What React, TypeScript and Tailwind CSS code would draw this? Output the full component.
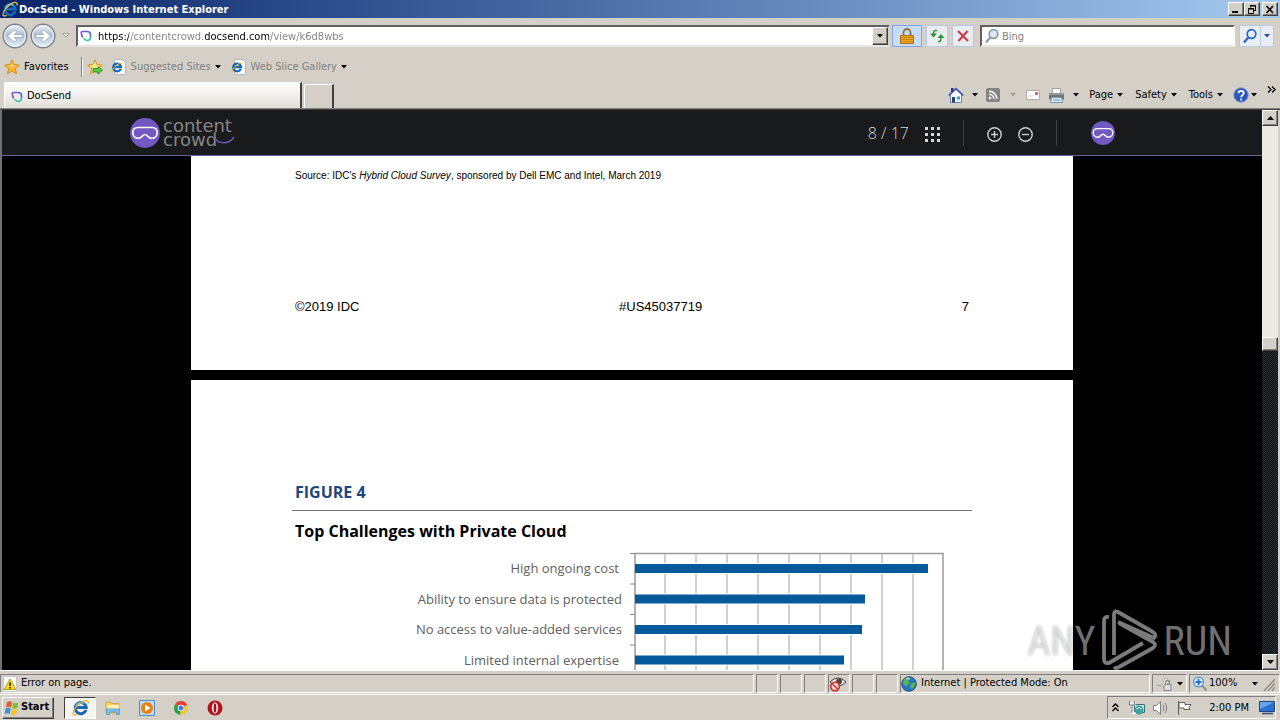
import type { ReactNode } from "react";

const ui = "font-['DejaVu_Sans_Condensed','DejaVu_Sans',sans-serif]";
const raised =
  "border border-t-white border-l-white border-r-[#404040] border-b-[#404040] bg-[#d4d0c8] shadow-[inset_-1px_-1px_0_#808080]";
const sunken = "border border-t-[#808080] border-l-[#808080] border-r-white border-b-white";

function Arrow({ color = "#000000" }: { color?: string }) {
  return (
    <svg width="6" height="4" viewBox="0 0 6 4" className="shrink-0">
      <path d="M0 0h6L3 3.5z" fill={color} />
    </svg>
  );
}

function IeIcon({ size = 16 }: { size?: number }) {
  return (
    <svg width={size} height={size} viewBox="0 0 16 16" className="shrink-0">
      <path
        d="M13.2 10.2A5.2 5.2 0 1 1 13.4 8H4"
        fill="none"
        stroke="#1667b8"
        strokeWidth="2.8"
      />
      <path d="M11.5 4.6A5 5 0 0 0 3.6 6.8" fill="none" stroke="#6fc3f2" strokeWidth="1.2" />
      <path
        d="M15 4.5C16 1.5 13.5.2 9.5 2.6 5 5.200 1.300 10 1 13.200c-.2 2.200 1.600 2.200 3.600 1"
        fill="none"
        stroke="#f0b82c"
        strokeWidth="1.3"
      />
    </svg>
  );
}

function IePage() {
  return (
    <svg width="16" height="16" viewBox="0 0 16 16" className="shrink-0">
      <path d="M3.500.5h8l3 3v12h-11z" fill="#fff" stroke="#b5b5b5" />
      <path d="M9.800 9.800A3.900 3.900 0 1 1 10 8H3" fill="none" stroke="#1667b8" strokeWidth="2.300" />
      <path d="M11.500 4.500C9 2.500 .8 9 1.200 12.800" fill="none" stroke="#f0b82c" />
    </svg>
  );
}

function DocSendIcon() {
  return (
    <svg width="12" height="12" viewBox="0 0 12 12" className="shrink-0">
      <path d="M2.500 7.500 1.300 3.200Q1 1.500 2.700 1.500H6" fill="none" stroke="#7a4fd0" strokeWidth="1.600" />
      <path d="M6 1.500h1.500A3.300 3.300 0 0 1 10.500 5v2" fill="none" stroke="#4f6ad8" strokeWidth="1.600" />
      <path d="M10.500 6.500c0 2.500-1.500 4-3.300 4C5.500 10.500 5 9 3.500 8.500" fill="none" stroke="#35c3a5" strokeWidth="1.600" />
    </svg>
  );
}

function Star({ add = false }: { add?: boolean }) {
  return (
    <svg width="16" height="16" viewBox="0 0 16 16" className="shrink-0">
      <path
        d="m8 .8 2.100 4.800 5.200.5-3.900 3.500 1.100 5.200L8 12.100l-4.500 2.700 1.100-5.200L.7 6.100l5.200-.5z"
        fill={add ? "#fbe36b" : "#f9b32b"}
        stroke="#d08a10"
        strokeWidth=".9"
      />
      <path d="m8 3 1.300 3.300 3 .4-5.500 2L4 6.700l2.800-.4z" fill="#fff" opacity=".35" />
      {add && <path d="M6 9.500h5V7.500l4.500 3.700-4.500 3.700v-2H6z" fill="#62c645" stroke="#2b8a1d" strokeWidth=".8" />}
    </svg>
  );
}

function NavArrow({ forward = false }: { forward?: boolean }) {
  return (
    <button aria-label={forward ? "Forward" : "Back"} className="shrink-0">
      <svg width="26" height="26" viewBox="0 0 26 26">
        <defs>
          <linearGradient id={forward ? "navF" : "navB"} x1="0" y1="0" x2="0" y2="1">
            <stop offset="0" stopColor="#f4f7fa" />
            <stop offset=".45" stopColor="#b3c0d0" />
            <stop offset="1" stopColor="#e8f6ff" />
          </linearGradient>
        </defs>
        <circle cx="13" cy="13" r="11.800" fill={`url(#${forward ? "navF" : "navB"})`} stroke="#76808d" strokeWidth="1.400" />
        <circle cx="13" cy="13" r="10.500" fill="none" stroke="#f4f8fc" />
        <path
          d={forward ? "M5.500 11.500h8L11 8.500l3-1.500 6.500 6-6.500 6-3-1.500 2.500-3h-8z" : "M20.500 11.500h-8L15 8.500 12 7l-6.500 6 6.500 6 3-1.500-2.500-3h8z"}
          fill="#fff"
          stroke="#8b9db3"
          strokeWidth=".7"
        />
      </svg>
    </button>
  );
}

function Magnifier({ color, fill = "none" }: { color: string; fill?: string }) {
  return (
    <svg width="16" height="16" viewBox="0 0 16 16" className="shrink-0">
      <circle cx="9.500" cy="6" r="4.300" fill={fill} stroke={color} strokeWidth="1.700" />
      <path d="m6.300 9.500-4.300 5" stroke={color} strokeWidth="2.200" />
    </svg>
  );
}

function Goggles({ size }: { size: number }) {
  return (
    <svg width={size} height={size} viewBox="0 0 30 30" className="shrink-0">
      <circle cx="15" cy="15" r="15" fill="#7159c1" />
      <path
        d="M8 9.500h14c3.500 0 5.200 2.200 5.200 5.200S25 20.300 21.500 20.300c-3.500 0-4-3.800-6.500-3.800s-3 3.800-6.500 3.800-5.700-2.600-5.700-5.600S4.500 9.500 8 9.500z"
        fill="none"
        stroke="#fff"
        strokeWidth="1.700"
      />
    </svg>
  );
}

function TitleBar() {
  return (
    <div className="flex h-[18px] shrink-0 items-center gap-px bg-linear-to-r from-[#0a246a] to-[#a6caf0] pr-0.5 pl-0.5">
      <IeIcon />
      <h1 className="flex-1 pt-px text-[11px] leading-4 font-bold text-white">DocSend - Windows Internet Explorer</h1>
      <div className="flex gap-0.5">
        <div className="flex">
          <button aria-label="Minimize" className={`flex h-3.5 w-4 items-center justify-center ${raised}`}>
            <svg width="10" height="9" viewBox="0 0 10 9"><path d="M1 6h6v2H1z" /></svg>
          </button>
          <button aria-label="Restore" className={`flex h-3.5 w-4 items-center justify-center ${raised}`}>
            <svg width="10" height="9" viewBox="0 0 10 9" fill="none" stroke="#000">
              <path d="M3.500 2.500V.5h5v5H7M3 1h6M1.500 3.500h5v5h-5zM1 4h6" />
            </svg>
          </button>
        </div>
        <button aria-label="Close" className={`flex h-3.5 w-4 items-center justify-center ${raised}`}>
          <svg width="10" height="9" viewBox="0 0 10 9"><path d="m1.500 1 6.500 7M8 1 1.500 8" stroke="#000" strokeWidth="1.600" /></svg>
        </button>
      </div>
    </div>
  );
}

function AddressRow() {
  const tool = "flex h-[22px] shrink-0 items-center justify-center border border-[#b9cbe2] bg-[#e9edf3]";
  return (
    <div className="flex h-[35px] shrink-0 items-center pr-1.5 pl-0.5">
      <div className="flex items-center gap-0.5">
        <NavArrow />
        <NavArrow forward />
      </div>
      <button aria-label="Recent pages" className="mx-1.5 flex w-2 justify-center">
        <svg width="8" height="5" viewBox="0 0 8 5"><path d="M.5.5h7L4 4.300z" fill="#e8e5df" stroke="#a8a49c" /></svg>
      </button>
      <div className="flex h-[22px] flex-1 items-center border-2 border-t-[#606060] border-r-[#d4d0c8] border-b-[#e8e5df] border-l-[#606060] bg-white pl-0.5">
        <DocSendIcon />
        <input
          aria-label="Address"
          defaultValue="https://contentcrowd.docsend.com/view/k6d8wbs"
          className="ml-1.5 h-[18px] min-w-0 flex-1 bg-[linear-gradient(to_right,#000_31px,#808080_31px,#808080_107px,#000_107px,#000_171px,#808080_171px)] bg-clip-text pt-0.5 text-[11px] text-transparent outline-none"
        />
        <button aria-label="Show addresses" className={`flex h-[18px] w-4 items-center justify-center ${raised}`}>
          <Arrow />
        </button>
      </div>
      <button aria-label="Security report" className="ml-0.5 flex h-[22px] w-[30px] shrink-0 items-center justify-center border border-[#7da7e8] bg-[#c6dcfa]">
        <svg width="14" height="16" viewBox="0 0 14 16">
          <path d="M3.500 8V4.500a3.500 3.500 0 0 1 7 0V8" fill="none" stroke="#8d7432" strokeWidth="1.800" />
          <path d="M.5 7.500h13v8H.5z" fill="#f0a91e" stroke="#a8700e" />
          <path d="M1 9.500h12M1 11.500h12M1 13.500h12" stroke="#c98512" />
        </svg>
      </button>
      <button aria-label="Refresh" className={`ml-1 w-[22px] ${tool}`}>
        <svg width="16" height="14" viewBox="0 0 16 14" fill="none" stroke="#2e9132" strokeWidth="1.500">
          <path d="M8 1.500C5 1 4.500 2 4.500 5M9 12.500c2.500.5 3-.5 3-4" />
          <path d="M1 4.500h7l-3.500 4zM8.500 9h7L12 5z" fill="#2e9132" stroke="none" />
        </svg>
      </button>
      <button aria-label="Stop" className={`ml-1 w-[22px] ${tool}`}>
        <svg width="12" height="12" viewBox="0 0 12 12"><path d="m1 1 10 10M10.500 1 1.500 11" stroke="#cf3a3f" strokeWidth="2" /></svg>
      </button>
      <div className="ml-1.5 flex h-[22px] w-[255px] shrink-0 items-center border-2 border-t-[#606060] border-r-white border-b-[#e8e5df] border-l-[#606060] bg-white pl-0.5">
        <Magnifier color="#8e9aa8" fill="#dceaf5" />
        <input aria-label="Search" placeholder="Bing" className="ml-0.5 h-[18px] min-w-0 flex-1 pt-0.5 text-[11px] outline-none placeholder:text-[#808080]" />
      </div>
      <button aria-label="Search the web" className={`ml-1 w-[22px] ${tool}`}>
        <Magnifier color="#2566c4" fill="#e3effc" />
      </button>
      <button aria-label="Search options" className={`-ml-px w-[14px] ${tool}`}>
        <Arrow color="#1c4f9c" />
      </button>
    </div>
  );
}

function FavoritesRow() {
  return (
    <div className="flex h-[27px] shrink-0 items-center pt-px pl-1 text-[11px]">
      <button className="flex items-center gap-1"><Star />Favorites</button>
      <div className="mr-1 ml-3 h-5 w-0.5 border-r border-l border-r-white border-l-[#808080]" />
      <button aria-label="Add to Favorites Bar"><Star add /></button>
      <button className="ml-2 flex items-center gap-1 text-[#808080]">
        <IePage />Suggested Sites<Arrow />
      </button>
      <button className="ml-2.5 flex items-center gap-1 text-[#808080]">
        <IePage />Web Slice Gallery<Arrow />
      </button>
    </div>
  );
}

function TabRow() {
  return (
    <div className="flex h-[29px] shrink-0 items-end border-b border-[#808080] pl-1">
      <div role="tab" aria-selected="true" className="flex h-[26px] w-[298px] items-center gap-1 border-t border-r-2 border-l border-t-white border-r-[#404040] border-l-white bg-linear-to-b from-white to-[#e2dfd9] pt-0.5 pl-1.5 text-[11px]">
        <DocSendIcon />DocSend
      </div>
      <button aria-label="New Tab" className="ml-0.5 h-6 w-[30px] border-t border-r-2 border-l border-t-white border-r-[#404040] border-l-white" />
      <div className="flex h-full flex-1 items-center justify-end pt-0.5 text-[11px]">
        <button aria-label="Home" className="flex items-center gap-2">
          <svg width="16" height="16" viewBox="0 0 16 16">
            <path d="M3 1h2.500v5H3z" fill="#23308c" />
            <path d="M2.500 7.500 8 2.500l5.500 5v8h-11z" fill="#f7f9fd" stroke="#6d84b4" />
            <path d="m.7 8.500 7.300-7 7.300 7" fill="none" stroke="#394fa6" strokeWidth="1.500" />
            <path d="M4 10h3v5.500H4z" fill="#294278" /><path d="M9 9.500h3v3H9z" fill="#3ba0d8" />
          </svg>
          <Arrow />
        </button>
        <button aria-label="Feeds" className="ml-2 flex items-center gap-2.5">
          <svg width="14" height="14" viewBox="0 0 14 14">
            <rect width="14" height="14" rx="2" fill="#858585" />
            <circle cx="4" cy="10" r="1.300" fill="#fff" />
            <path d="M3 6.200A4.800 4.800 0 0 1 7.800 11M3 3.200A7.800 7.800 0 0 1 10.800 11" fill="none" stroke="#fff" strokeWidth="1.400" />
          </svg>
          <Arrow color="#a09c94" />
        </button>
        <button aria-label="Read mail" className="ml-2.5">
          <svg width="14" height="10" viewBox="0 0 14 10">
            <path d="M.5.5h13v9H.5z" fill="#fff" stroke="#b0a9a4" /><path d="M9 2h3v3H9z" fill="#d8626a" /><path d="M2 6h5" stroke="#d7d3ce" />
          </svg>
        </button>
        <button aria-label="Print" className="ml-2 flex items-center gap-2">
          <svg width="17" height="15" viewBox="0 0 17 15">
            <path d="M4.500.5h8v6h-8z" fill="#fff" stroke="#9aa0a6" />
            <path d="M1 5h15v6.500H1z" fill="#70757b" /><path d="M1 6h15" stroke="#b5babf" />
            <path d="M3.500 9.500h10l1 5h-12z" fill="#d9ecf8" stroke="#7e95a5" /><path d="M5 12h7" stroke="#4c9bcf" />
          </svg>
          <Arrow />
        </button>
        <button className="ml-2.5 flex items-center gap-1">Page<Arrow /></button>
        <button className="ml-3 flex items-center gap-1">Safety<Arrow /></button>
        <button className="ml-3 flex items-center gap-1">Tools<Arrow /></button>
        <button aria-label="Help" className="ml-2.5 flex items-center gap-0.5">
          <svg width="16" height="16" viewBox="0 0 16 16">
            <circle cx="8" cy="8" r="7.300" fill="#2c56b8" stroke="#8fa3cf" />
            <path d="M5.500 6.200C5.500 3 10.700 3 10.700 6.200 10.700 8 8.200 8 8.200 10.200M8.200 11.500v2" fill="none" stroke="#fff" strokeWidth="1.800" />
          </svg>
          <Arrow />
        </button>
        <button aria-label="More commands" className="mr-1 mb-3 ml-2.5">
          <svg width="9" height="7" viewBox="0 0 9 7"><path d="m1 .5 3 3-3 3M5 .5l3 3-3 3" fill="none" stroke="#000" strokeWidth="1.300" /></svg>
        </button>
      </div>
    </div>
  );
}

function ViewerHeader() {
  return (
    <header className="flex h-[46px] shrink-0 items-center border-b border-[#6c62a0] bg-[#191a1c] pl-32">
      <a href="#home" aria-label="Content Crowd" className="flex flex-1 items-center gap-[3px]">
        <Goggles size={30} />
        <div className="flex items-end">
          <div className="font-['DejaVu_Sans',sans-serif] text-[18px] leading-[14px] text-[#858587]">
            <div>content</div>
            <div>crowd</div>
          </div>
          <svg width="22" height="12" viewBox="0 0 22 12" className="-ml-[18px] shrink-0">
            <path d="M1 3c3 6 14 7 19-1" fill="none" stroke="#6a55b4" strokeWidth="1.500" />
          </svg>
        </div>
      </a>
      <div className="mr-4 font-['Open_Sans',sans-serif] text-[16px] font-light text-[#d8d8d8]">8 / 17</div>
      <button aria-label="Thumbnails" className="pt-1">
        <svg width="15" height="15" viewBox="0 0 15 15" fill="#d6d6d6">
          <path d="M0 0h3v3H0zM6 0h3v3H6zM12 0h3v3h-3zM0 6h3v3H0zM6 6h3v3H6zM12 6h3v3h-3zM0 12h3v3H0zM6 12h3v3H6zM12 12h3v3h-3z" />
        </svg>
      </button>
      <div className="mr-[23px] ml-[23px] h-[26px] w-px bg-[#3d3e41]" />
      <button aria-label="Zoom in" className="pt-1">
        <svg width="15" height="15" viewBox="0 0 15 15" fill="none" stroke="#cfcfcf" strokeWidth="1.400">
          <circle cx="7.500" cy="7.500" r="6.700" /><path d="M4 7.500h7M7.500 4v7" />
        </svg>
      </button>
      <button aria-label="Zoom out" className="ml-4 pt-1">
        <svg width="15" height="15" viewBox="0 0 15 15" fill="none" stroke="#cfcfcf" strokeWidth="1.400">
          <circle cx="7.500" cy="7.500" r="6.700" /><path d="M4 7.500h7" />
        </svg>
      </button>
      <div className="mr-[34px] ml-[23px] h-[26px] w-px bg-[#3d3e41]" />
      <div className="mr-[147px]"><Goggles size={24} /></div>
    </header>
  );
}

const challenges = [
  { label: "High ongoing cost", end: 619, value: 293 },
  { label: "Ability to ensure data is protected", end: 622, value: 230 },
  { label: "No access to value-added services", end: 622, value: 227 },
  { label: "Limited internal expertise", end: 619, value: 209 },
];

function Chart() {
  return (
    <svg width="680" height="130" viewBox="292 546 680 130" className="font-['Open_Sans',sans-serif] text-[13px]">
      {[665, 696, 727, 758, 789, 820, 851, 882, 913].map((x) => (
        <path key={x} d={`M${x} 553v123`} stroke="#c2c2c2" strokeWidth="1.500" />
      ))}
      <path d="M635 676V553.500h308V676" fill="none" stroke="#9a9a9a" strokeWidth="1.500" />
      {challenges.map((c, i) => (
        <g key={c.label}>
          <path d={`M630 ${553.5 + i * 30.5}h5`} stroke="#8a8a8a" />
          <rect x="636" y={563 + i * 30.5} width={c.value - 1} height="11" fill="#fff" />
          <rect x="635" y={564 + i * 30.5} width={c.value} height="9" fill="#045a9a" />
          <text x={c.end} y={573 + i * 30.5} textAnchor="end" fill="#606060">{c.label}</text>
        </g>
      ))}
    </svg>
  );
}

function Document() {
  return (
    <main className="flex flex-1 flex-col items-center gap-2.5 overflow-hidden bg-black">
      <section className="flex h-[214px] w-[882px] max-w-full shrink-0 flex-col bg-white px-[104px] pt-3 font-['Liberation_Sans',sans-serif] text-black">
        <p className="text-[10px] leading-4">
          Source: IDC's <i>Hybrid Cloud Survey</i>, sponsored by Dell EMC and Intel, March 2019
        </p>
        <footer className="mt-[115px] flex justify-between text-[13px] leading-4">
          <span>©2019 IDC</span>
          <span>#US45037719</span>
          <span>7</span>
        </footer>
      </section>
      <section className="w-[882px] max-w-full shrink-0 bg-white px-[101px] pt-[101px] font-['Open_Sans',sans-serif]">
        <h2 className="pl-[3px] text-[16px] leading-[22px] font-bold text-[#1d477d]">FIGURE 4</h2>
        <div className="mt-[7px] h-px bg-[#777]" />
        <h3 className="mt-2 pl-[3px] text-[16px] leading-[24px] font-bold text-black">Top Challenges with Private Cloud</h3>
        <div className="mt-[3px]"><Chart /></div>
      </section>
    </main>
  );
}

function Watermark() {
  const word =
    "pt-1 font-['Liberation_Sans_Narrow','Roboto_Condensed','Open_Sans_Condensed',sans-serif] text-[40px] leading-[46px] text-white/45 [text-shadow:0_0_3px_rgba(0,0,0,0.3)]";
  return (
    <div className="pointer-events-none absolute right-12 bottom-0 flex items-center gap-1.5">
      <span className={word}>ANY</span>
      <svg width="56" height="61" viewBox="0 0 56 61" fill="none" stroke="#7b7b7b" strokeWidth="3.800" strokeLinejoin="round">
        <path d="M7 8Q2 7 2 12v38q0 5 5 4l34-20" />
        <path d="M12 46V6q0-5 4-3l35 20q4 3 1 6L16 13" />
        <path d="M12 58q2 2 5 0l34-19q4-3 0-6L17 14" />
      </svg>
      <span className={word}>RUN</span>
    </div>
  );
}

function ScrollBar() {
  return (
    <div className="mr-0.5 flex w-4 shrink-0 flex-col bg-[#ebe9e4]">
      <button aria-label="Scroll up" className={`flex h-4 items-center justify-center ${raised}`}>
        <svg width="7" height="4" viewBox="0 0 7 4"><path d="M0 4h7L3.500 0z" /></svg>
      </button>
      <div className="flex-[211]" />
      <div className={`h-[14px] ${raised}`} />
      <div className="flex-[303] bg-[repeating-conic-gradient(#2c3036_0_25%,#0c0e10_0_50%)] bg-size-[2px_2px]" />
      <button aria-label="Scroll down" className={`flex h-4 items-center justify-center ${raised}`}>
        <svg width="7" height="4" viewBox="0 0 7 4"><path d="M0 0h7L3.500 4z" /></svg>
      </button>
    </div>
  );
}

function Cell({ children, className = "w-[22px]" }: { children?: ReactNode; className?: string }) {
  return <div className={`flex h-[19px] items-center ${sunken} ${className}`}>{children}</div>;
}

function StatusBar() {
  return (
    <div className="flex h-[24px] shrink-0 items-center gap-0.5 border-t border-white pt-0.5 text-[11px]">
      <Cell className="flex-1 gap-1 pl-0.5">
        <svg width="14" height="16" viewBox="0 0 14 16">
          <path d="M.5.5h13v15H.5z" fill="#fff" stroke="#c8c8c8" />
          <path d="m7 3 5.800 10.500H1.200z" fill="#f8dc20" stroke="#b79b10" /><path d="M7 6.500v3.500M7 11v1.500" stroke="#000" strokeWidth="1.400" />
        </svg>
        Error on page.
      </Cell>
      <Cell /><Cell /><Cell />
      <Cell>
        <svg width="18" height="16" viewBox="0 0 18 16">
          <path d="M1 6q8-8 16 0-8 8-16 0z" fill="#fff" stroke="#333" /><circle cx="10" cy="5.500" r="3" fill="#5a4438" />
          <circle cx="6" cy="10.500" r="4.300" fill="#f2d9d7" stroke="#cc3a35" strokeWidth="1.700" /><path d="m3 7.500 6 6" stroke="#cc3a35" strokeWidth="1.600" />
        </svg>
      </Cell>
      <Cell /><Cell />
      <Cell className="w-[250px] gap-1">
        <svg width="16" height="16" viewBox="0 0 16 16">
          <circle cx="8" cy="8" r="7.300" fill="#2673c7" stroke="#28527f" />
          <path d="M3 3q4-3 6-1L7 5l2 2-4 3-3-2zM10 8l4-2q1 4-3 7l-2-2z" fill="#59b84b" /><path d="M5 3q2-1 4 0" stroke="#c9e8fa" fill="none" />
        </svg>
        Internet | Protected Mode: On
      </Cell>
      <Cell className="w-[35px] justify-center gap-1">
        <svg width="17" height="16" viewBox="0 0 17 16" className="shrink-0">
          <path d="M1 9h5l3-7q4 1 3 5l-3 4z" fill="#f4f4f4" stroke="#aaa" /><path d="M8 8.500h7v6H8z" fill="#ddd" stroke="#888" /><path d="M9.500 8V6.500a2 2 0 0 1 4 0V8" fill="none" stroke="#888" strokeWidth="1.300" />
        </svg>
        <Arrow />
      </Cell>
      <Cell className="w-[91px] gap-px pl-0.5">
        <svg width="16" height="16" viewBox="0 0 16 16">
          <circle cx="6.500" cy="6" r="4.800" fill="#eef7ff" stroke="#5c94d4" strokeWidth="1.500" /><path d="M6.500 3v6M3.500 6h6" stroke="#1d6ad0" strokeWidth="2" /><path d="m10 9.500 4.500 5" stroke="#8f8f8f" strokeWidth="2" />
        </svg>
        100%
        <span className="ml-3.5"><Arrow /></span>
        <svg width="12" height="14" viewBox="0 0 12 14" className="ml-1"><path d="M1 14 12 2M5 14l7-8M9 14l3-4" stroke="#8c8880" strokeWidth="1.300" /></svg>
      </Cell>
    </div>
  );
}

function TaskBar() {
  return (
    <div className="flex h-[26px] shrink-0 items-center border-t border-white pr-1 pl-0.5 text-[11px]">
      <button className={`flex h-[22px] w-[52px] items-center gap-px pl-px font-bold ${raised}`}>
        <svg width="16" height="16" viewBox="0 0 16 16" className="shrink-0">
          <path d="M3 2q2.500-1.500 5 0L7 7.500q-2.500-1.500-5 0z" fill="#e9592b" /><path d="M9 2.500q2.500 1.500 5.500 0L13.500 8Q11 9.500 8 8z" fill="#84bb3c" />
          <path d="M1.700 8.500q2.500-1.500 5 0l-1 5.500q-2.500-1.500-5 0z" fill="#3b8fd9" /><path d="M7.700 9q2.500 1.500 5.500 0l-1 5.500q-2.500 1.500-5.500 0z" fill="#f6c22f" />
        </svg>
        Start
      </button>
      <button aria-label="Internet Explorer" className="ml-2.5 flex h-[22px] w-8 items-center justify-center border border-t-[#404040] border-r-white border-b-white border-l-[#404040] bg-[#f6f5f3]"><IeIcon size={17} /></button>
      <button aria-label="Explorer" className="ml-[9px]">
        <svg width="16" height="16" viewBox="0 0 16 16">
          <path d="M1 2h5l1 1.500h7V13H1z" fill="#f0cd62" stroke="#c39a33" strokeWidth=".7" /><path d="M2 5h12v4H2z" fill="#fdf0b5" /><path d="M1.500 9h13v5.500h-3V12h-7v2.500h-3z" fill="#7cc1ea" stroke="#4b93c5" strokeWidth=".7" />
        </svg>
      </button>
      <button aria-label="Media Player" className="ml-[18px]">
        <svg width="16" height="16" viewBox="0 0 16 16">
          <path d="M.5.500h15v15H.5z" fill="#b9dcf3" stroke="#4e8fc6" /><circle cx="8" cy="8" r="6" fill="#ee7f13" /><path d="m6 4.500 5.500 3.500L6 11.500z" fill="#fff" />
        </svg>
      </button>
      <button aria-label="Chrome" className="ml-[18px]">
        <svg width="16" height="16" viewBox="0 0 16 16">
          <path d="M8 8 2 4.300A7 7 0 0 1 14.300 5z" fill="#e14435" /><path d="M8 8 7.500 15A7 7 0 0 1 2 4.300z" fill="#2f9d4e" /><path d="M8 8l6.300-3A7 7 0 0 1 7.500 15z" fill="#f7c52d" />
          <circle cx="8" cy="8" r="3.300" fill="#fff" /><circle cx="8" cy="8" r="2.500" fill="#3f7ee0" />
        </svg>
      </button>
      <button aria-label="Opera" className="ml-[18px]">
        <svg width="16" height="16" viewBox="0 0 16 16"><circle cx="8" cy="8" r="7.500" fill="#b3121b" /><ellipse cx="8" cy="8" rx="3.200" ry="5.800" fill="#f4e6e6" /><ellipse cx="8" cy="8" rx="1.300" ry="4.800" fill="#a01018" /></svg>
      </button>
      <div className={`ml-auto flex h-[23px] w-[169px] items-center pl-1 ${sunken}`}>
        <svg width="7" height="9" viewBox="0 0 7 9" fill="none" stroke="#000" strokeWidth="1.300"><path d="m.5 4 3-3 3 3M.5 8l3-3 3 3" /></svg>
        <svg width="16" height="16" viewBox="0 0 16 16" className="ml-2.5">
          <path d="M5.500 4.500h10v8h-10z" fill="#b9e3e3" stroke="#3f6f78" /><circle cx="10" cy="10" r="4.500" fill="#3da39c" /><path d="M7 9q3-3 6 0" stroke="#d2f2dc" fill="none" /><path d="M1.500 1v3.500h4V1M3.500 4.500V13h3" fill="none" stroke="#fff" strokeWidth="2" /><path d="M.5 1v4h5V1M3 5v8" fill="none" stroke="#555" strokeWidth=".8" />
        </svg>
        <svg width="16" height="16" viewBox="0 0 16 16" className="ml-2" fill="none" stroke="#808080">
          <path d="M.5 5.500h3l4-4v13l-4-4h-3z" fill="#fff" /><path d="M10 5q2 3 0 6M12 3q3.500 5 0 10" />
        </svg>
        <svg width="16" height="16" viewBox="0 0 16 16" className="ml-2" fill="#fff" stroke="#606060">
          <path d="M1.500 1v14M2 2.500h6v2h6l-2 3 1 2H7v-1.500H2z" />
        </svg>
        <span className="ml-auto pt-px">2:00 PM</span>
        <svg width="16" height="14" viewBox="0 0 16 14" className="ml-2.5"><path d="M.5.5h15v10H.5z" fill="#2d71d0" stroke="#1d3f84" /><path d="M1 1h14L1 8z" fill="#6ba5ec" /><path d="M3 12.500h11" stroke="#334e7e" strokeWidth="1.500" /></svg>
      </div>
    </div>
  );
}

export default function App() {
  return (
    <div className={`flex h-screen flex-col overflow-hidden bg-[#d4d0c8] text-black ${ui}`}>
      <TitleBar />
      <AddressRow />
      <FavoritesRow />
      <TabRow />
      <div className="relative flex min-h-0 flex-1 border-t border-l-2 border-t-[#404040] border-l-[#707070]">
        <div className="flex min-w-0 flex-1 flex-col">
          <ViewerHeader />
          <Document />
        </div>
        <ScrollBar />
        <Watermark />
      </div>
      <StatusBar />
      <TaskBar />
    </div>
  );
}
